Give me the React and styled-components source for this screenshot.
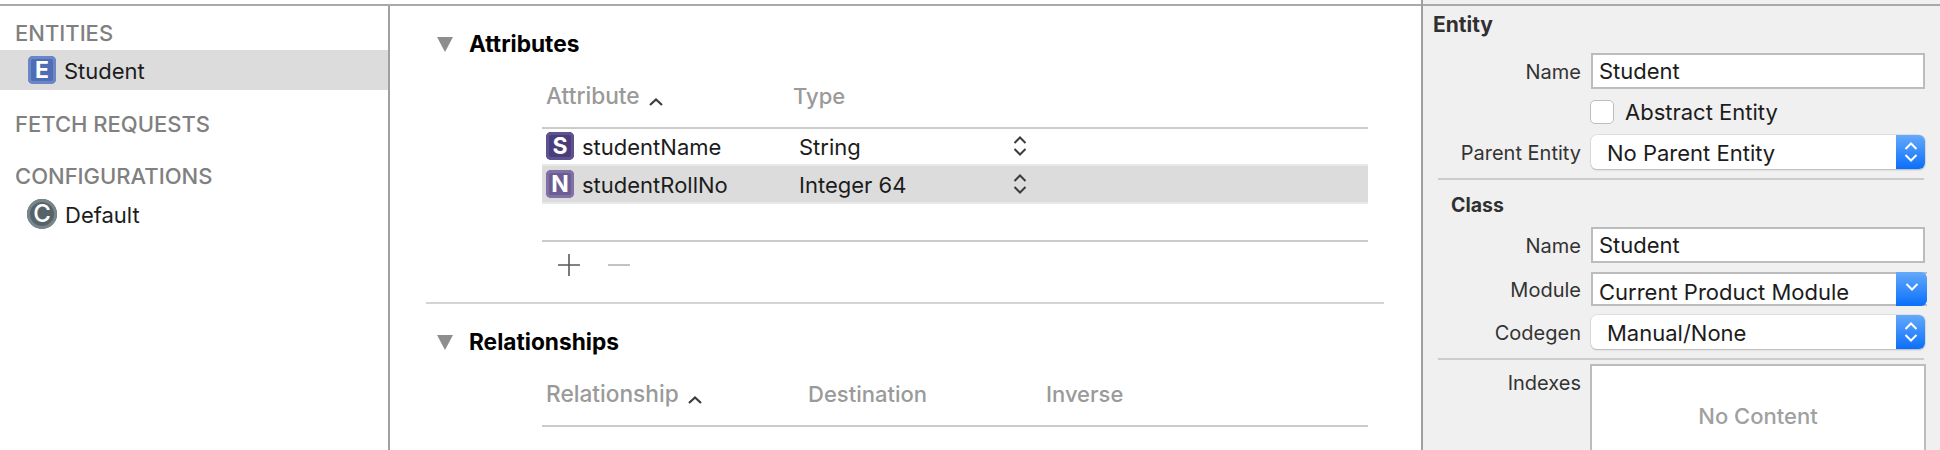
import React from "react"
import styled, { createGlobalStyle } from "styled-components"

const FontStack = `Inter, "Liberation Sans", sans-serif`

const GlobalStyle = createGlobalStyle`
  html, body {
    margin: 0;
    padding: 0;
    background: white;
  }
  * {
    box-sizing: border-box;
  }
`

const Page = styled.div`
  display: flex;
  width: 1940px;
  height: 450px;
  overflow: hidden;
  font-family: ${FontStack};
  font-size: 22px;
  line-height: 24px;
  color: #1c1c1c;
`

const Editor = styled.div`
  width: 1421px;
  padding-top: 4px;
  display: flex;
  flex-direction: column;
`

const Panes = styled.div`
  flex: 1;
  display: flex;
  border-top: 2px solid #a9a9a9;
`

const Sidebar = styled.aside`
  width: 390px;
  flex: none;
  border-right: 2px solid #a0a0a0;
`

const GroupHeading = styled.div`
  padding: ${({ $top }) => $top}px 0 0 15px;
  font-size: 22px;
  font-weight: 500;
  color: #808080;
`

const SidebarRow = styled.div`
  height: 40px;
  margin-top: ${({ $top }) => $top || 0}px;
  padding-left: 28px;
  display: flex;
  align-items: center;
  gap: 8px;
  background: ${({ $selected }) => ($selected ? "#dcdcdc" : "transparent")};
`

const Badge = styled.span`
  width: 28px;
  height: 28px;
  flex: none;
  display: flex;
  align-items: center;
  justify-content: center;
  border-radius: 5px;
  background: ${({ $color }) => $color};
  box-shadow: inset 0 0 0 3px ${({ $edge }) => $edge};
  color: white;
  font-size: 23px;
  font-weight: 700;
`

const RoundBadge = styled(Badge)`
  width: 30px;
  height: 30px;
  margin-left: -1px;
  border-radius: 50%;
  font-size: 24px;
  font-weight: 500;
`

const Cell = styled.span`
  padding-top: 2px;
`

const Main = styled.main`
  flex: 1;
  min-width: 0;
`

const SectionHeader = styled.div`
  margin-top: 26px;
  padding-left: 47px;
  display: flex;
  align-items: center;
  gap: 16px;
  font-size: 22.7px;
  font-weight: 700;
  color: black;
`

const Disclosure = styled.span`
  width: 0;
  height: 0;
  border-left: 8px solid transparent;
  border-right: 8px solid transparent;
  border-top: 15px solid #8e8e8e;
`

const Table = styled.div`
  margin-left: 152px;
  width: 826px;
`

const TableHead = styled.div`
  display: grid;
  grid-template-columns: ${({ $columns }) => $columns};
  padding: 28px 0 19px 4px;
  border-bottom: 2px solid #cbcbcb;
  color: #9a9a9a;
  font-weight: 500;
  height: 73px;
`

const SortColumn = styled.div`
  display: flex;
  align-items: center;
  gap: 9px;
  font-size: 22.7px;
`

const SortCaret = styled.svg`
  width: 14px;
  height: 8px;
  margin-top: 12px;
  fill: none;
  stroke: #3c3c3c;
  stroke-width: 2.2;
`

const TableRow = styled.div`
  display: grid;
  grid-template-columns: 253px 214px 14px;
  align-items: center;
  padding: ${({ $selected }) => ($selected ? "4px 0 4px 4px" : "3px 0 4px 4px")};
  background: ${({ $selected }) => ($selected ? "#dcdcdc" : "transparent")};
  border-top: ${({ $selected }) => ($selected ? "2px solid #e8e8e8" : "none")};
  border-bottom: ${({ $selected }) => ($selected ? "2px solid #e8e8e8" : "none")};
`

const NameCell = styled.div`
  display: flex;
  align-items: center;
  gap: 8px;
`

const UpDown = styled.svg`
  width: 14px;
  height: 20px;
  fill: none;
  stroke: ${({ $light }) => ($light ? "white" : "#3c3c3c")};
  stroke-width: 2;
`

const TableFoot = styled.div`
  margin-top: 36px;
  padding: 12px 0 0 16px;
  border-top: 2px solid #cbcbcb;
  display: flex;
  gap: 28px;
`

const ToolIcon = styled.svg`
  width: 22px;
  height: 22px;
  stroke: ${({ $disabled }) => ($disabled ? "#b4b4b4" : "#5a5a5a")};
  stroke-width: 1.6;
`

const SectionRule = styled.div`
  margin: 26px 0 0 36px;
  width: 958px;
  border-top: 2px solid #d4d4d4;
`

const Inspector = styled.aside`
  flex: 1;
  padding-top: 4px;
  border-left: 2px solid #a0a0a0;
  background: #f0f0f0;
`

const TopRule = styled.div`
  border-top: 2px solid #a9a9a9;
`

const PanelTitle = styled.div`
  margin-top: ${({ $top }) => $top}px;
  padding-left: ${({ $left }) => $left}px;
  font-size: ${({ $size }) => $size}px;
  font-weight: 700;
  color: #303030;
`

const Form = styled.div`
  margin-top: ${({ $top }) => $top}px;
  display: grid;
  grid-template-columns: 158px 334px;
  column-gap: 10px;
  row-gap: ${({ $gap }) => $gap}px;
  align-items: center;
`

const Label = styled.label`
  text-align: right;
  font-size: 20px;
  color: #333;
  align-self: ${({ $top }) => ($top ? "start" : "center")};
  padding-top: ${({ $top }) => ($top ? "7px" : "2px")};
`

const TextField = styled.div`
  height: 36px;
  padding-left: 6px;
  display: flex;
  align-items: center;
  background: white;
  border: 2px solid #bcbcbc;
`

const CheckRow = styled.div`
  grid-column: 2;
  display: flex;
  align-items: center;
  gap: 11px;
  margin-left: -1px;
`

const CheckBox = styled.span`
  width: 24px;
  height: 24px;
  background: white;
  border: 1.5px solid #bdbdbd;
  border-radius: 5px;
`

const PopUp = styled.div`
  height: 34px;
  display: flex;
  align-items: stretch;
  background: white;
  border-radius: ${({ $square }) => ($square ? "0" : "6px")};
  border: ${({ $square }) => ($square ? "2px solid #bcbcbc" : "none")};
  border-right: none;
  box-shadow: ${({ $square }) =>
    $square ? "none" : "0 0 0 0.5px #d0d0d0, 0 1px 1.5px #a8a8a8"};
  margin-right: ${({ $square }) => ($square ? "-2px" : "0")};
`

const PopUpText = styled.div`
  flex: 1;
  display: flex;
  align-items: center;
  padding-left: ${({ $square }) => ($square ? "6px" : "16px")};
  padding-top: ${({ $square }) => ($square ? "5px" : "2px")};
`

const PopUpArrow = styled.div`
  width: ${({ $square }) => ($square ? "31px" : "29px")};
  margin: ${({ $square }) => ($square ? "-2px 0" : "0")};
  display: flex;
  align-items: center;
  justify-content: center;
  border-radius: 0 6px 6px 0;
  background: linear-gradient(#64a9fb, #0a6ffb);
`

const Chevron = styled.svg`
  width: 14px;
  height: 8px;
  margin-bottom: 4px;
  fill: none;
  stroke: white;
  stroke-width: 2;
`

const Rule = styled.div`
  margin: 9px 0 0 15px;
  width: 486px;
  border-top: 2px solid #cccccc;
`

const IndexList = styled.div`
  height: 100px;
  margin: 0 -1px;
  padding-top: 38px;
  background: white;
  border: 2px solid #bcbcbc;
  text-align: center;
  color: #a0a0a0;
  font-weight: 500;
`

const UpDownIcon = ({ light }) => (
  <UpDown viewBox="0 0 14 20" $light={light}>
    <path d="M1.5 7 L7 1.5 L12.5 7 M1.5 13 L7 18.5 L12.5 13" />
  </UpDown>
)

const Caret = () => (
  <SortCaret viewBox="0 0 14 8">
    <path d="M1 7 L7 1.5 L13 7" />
  </SortCaret>
)

const Arrow = ({ square }) => (
  <PopUpArrow $square={square}>
    {square ? (
      <Chevron viewBox="0 0 14 8">
        <path d="M1.5 1 L7 6.5 L12.5 1" />
      </Chevron>
    ) : (
      <UpDownIcon light />
    )}
  </PopUpArrow>
)

const App = () => (
  <Page>
    <GlobalStyle />
    <Editor>
      <Panes>
        <Sidebar>
          <GroupHeading $top={15}>ENTITIES</GroupHeading>
          <SidebarRow $selected $top={5}>
            <Badge $color="#4f6db5" $edge="#6b86c6">E</Badge>
            <Cell>Student</Cell>
          </SidebarRow>
          <GroupHeading $top={22}>FETCH REQUESTS</GroupHeading>
          <GroupHeading $top={28}>CONFIGURATIONS</GroupHeading>
          <SidebarRow $top={6}>
            <RoundBadge $color="#56646a" $edge="#78858a">C</RoundBadge>
            <Cell>Default</Cell>
          </SidebarRow>
        </Sidebar>
        <Main>
          <SectionHeader>
            <Disclosure />
            Attributes
          </SectionHeader>
          <Table>
            <TableHead $columns="247px 1fr">
              <SortColumn>
                Attribute
                <Caret />
              </SortColumn>
              <div>Type</div>
            </TableHead>
            <TableRow>
              <NameCell>
                <Badge $color="#4a3d7c" $edge="#5f5290">S</Badge>
                <Cell>studentName</Cell>
              </NameCell>
              <Cell>String</Cell>
              <UpDownIcon />
            </TableRow>
            <TableRow $selected>
              <NameCell>
                <Badge $color="#6d5c94" $edge="#8070a6">N</Badge>
                <Cell>studentRollNo</Cell>
              </NameCell>
              <Cell>Integer 64</Cell>
              <UpDownIcon />
            </TableRow>
            <TableFoot>
              <ToolIcon viewBox="0 0 22 22">
                <path d="M0 11 H22 M11 0 V22" />
              </ToolIcon>
              <ToolIcon viewBox="0 0 22 22" $disabled>
                <path d="M0 11 H22" />
              </ToolIcon>
            </TableFoot>
          </Table>
          <SectionRule />
          <SectionHeader>
            <Disclosure />
            Relationships
          </SectionHeader>
          <Table>
            <TableHead $columns="262px 238px 1fr">
              <SortColumn>
                Relationship
                <Caret />
              </SortColumn>
              <div>Destination</div>
              <div>Inverse</div>
            </TableHead>
          </Table>
        </Main>
      </Panes>
    </Editor>
    <Inspector>
      <TopRule />
      <PanelTitle $top={7} $left={10} $size={21}>Entity</PanelTitle>
      <Form $top={16} $gap={11}>
        <Label>Name</Label>
        <TextField>Student</TextField>
        <CheckRow>
          <CheckBox />
          Abstract Entity
        </CheckRow>
        <Label>Parent Entity</Label>
        <PopUp>
          <PopUpText>No Parent Entity</PopUpText>
          <Arrow />
        </PopUp>
      </Form>
      <Rule />
      <PanelTitle $top={13} $left={28} $size={19.5}>Class</PanelTitle>
      <Form $top={10} $gap={9}>
        <Label>Name</Label>
        <TextField>Student</TextField>
        <Label>Module</Label>
        <PopUp $square>
          <PopUpText $square>Current Product Module</PopUpText>
          <Arrow square />
        </PopUp>
        <Label>Codegen</Label>
        <PopUp>
          <PopUpText>Manual/None</PopUpText>
          <Arrow />
        </PopUp>
      </Form>
      <Rule />
      <Form $top={4} $gap={0}>
        <Label $top>Indexes</Label>
        <IndexList>No Content</IndexList>
      </Form>
    </Inspector>
  </Page>
)

export default App
